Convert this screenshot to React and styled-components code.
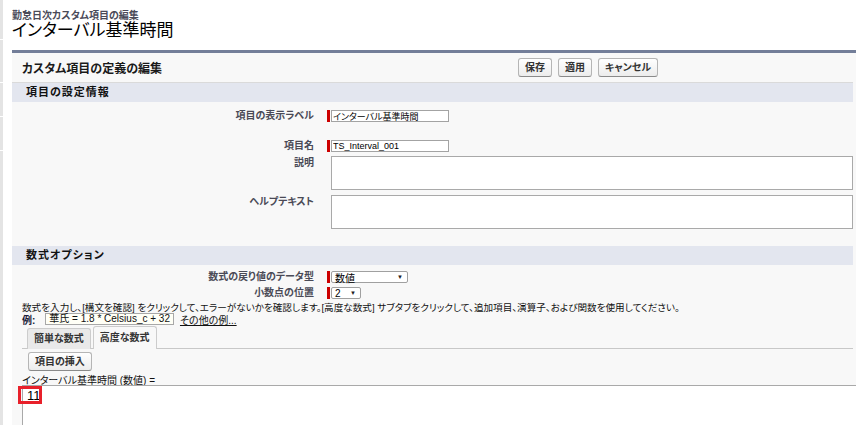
import React from "react";
import styled, { createGlobalStyle } from "styled-components";

const GlobalStyle = createGlobalStyle`
  html, body {
    margin: 0;
    padding: 0;
    background: #fff;
  }
  body {
    font-family: "Liberation Sans", "Noto Sans CJK JP", sans-serif;
    font-feature-settings: "palt";
    font-size: 10px;
    color: #222;
    overflow: hidden;
  }
`;

const Page = styled.div`
  display: flex;
  width: 856px;
  height: 425px;
  overflow: hidden;
`;

const SideStrip = styled.div`
  width: 3px;
  flex-shrink: 0;
  display: flex;
  flex-direction: column;
  gap: 1px;
`;

const StripPiece = styled.div`
  background: #e4e4e4;
  height: ${({ $h }) => ($h ? `${$h}px` : "auto")};
  flex: ${({ $h }) => ($h ? "none" : "1")};
`;

const Main = styled.div`
  flex: 1;
  min-width: 0;
  padding-left: 9px;
`;

const TitleBlock = styled.div`
  height: 50px;
  padding-top: 10px;
  box-sizing: border-box;
`;

const SubTitle = styled.div`
  font-size: 10px;
  font-weight: bold;
  line-height: 11px;
  color: #4a4a58;
`;

const PageTitle = styled.h1`
  margin: 0;
  font-size: 17px;
  font-weight: normal;
  line-height: 19px;
  color: #000;
`;

const Panel = styled.div`
  border-top: 3px solid #737e99;
  background: #f8f8f8;
  padding-right: 3px;
`;

const PanelHeader = styled.div`
  display: flex;
  align-items: center;
  height: 29px;
  padding-left: 10px;
  border-bottom: 1px solid #dadada;
`;

const HeaderTitle = styled.h2`
  margin: 0;
  width: 496px;
  font-size: 12px;
  font-weight: bold;
  color: #1a1a1a;
`;

const ButtonGroup = styled.div`
  display: flex;
  gap: 6px;
`;

const Button = styled.button`
  height: 19px;
  padding: 0 6px;
  border: 1px solid #b5b5b5;
  border-bottom-color: #8a8a8a;
  border-radius: 3px;
  background: linear-gradient(#ffffff, #ececec);
  font-family: inherit;
  font-feature-settings: "palt";
  font-size: 10px;
  font-weight: bold;
  color: #333;
  line-height: 17px;
`;

const SectionHeader = styled.h3`
  margin: 0;
  height: 19px;
  padding-left: 14px;
  background: #e3e6ef;
  font-size: 11px;
  font-weight: bold;
  letter-spacing: 1px;
  line-height: 19px;
  color: #111;
`;

const FieldRow = styled.div`
  display: grid;
  grid-template-columns: 302px 1fr;
  align-items: ${({ $top }) => ($top ? "start" : "center")};
  margin-top: ${({ $mt }) => $mt}px;
`;

const Label = styled.div`
  text-align: right;
  font-size: 10px;
  font-weight: bold;
  line-height: 12px;
  color: #4a4a56;
  padding-top: ${({ $top }) => ($top ? "1px" : "0")};
`;

const DataCell = styled.div`
  display: flex;
  align-items: flex-start;
  padding-left: 13px;
`;

const RequiredBar = styled.span`
  width: 3px;
  height: 12px;
  margin-right: 1px;
  flex-shrink: 0;
  background: ${({ $off }) => ($off ? "transparent" : "#c00")};
`;

const TextInput = styled.input`
  width: 118px;
  height: 12px;
  box-sizing: border-box;
  padding: 0 1px;
  border: 1px solid #a3a3a3;
  background: #fff;
  font-family: inherit;
  font-feature-settings: "palt";
  font-size: 9px;
  line-height: 10px;
  color: #000;
  outline: none;
`;

const TextArea = styled.textarea`
  flex: 1;
  height: 34px;
  box-sizing: border-box;
  border: 1px solid #a9a9a9;
  background: #fff;
  resize: none;
  outline: none;
`;

const SelectBox = styled.div`
  width: ${({ $w }) => $w}px;
  height: 12px;
  box-sizing: border-box;
  display: flex;
  align-items: center;
  justify-content: space-between;
  padding: 0 4px 0 3px;
  border: 1px solid #a0a0a0;
  border-radius: 2px;
  background: #fff;
  font-size: 10px;
  color: #000;
`;

const Caret = styled.span`
  font-size: 6px;
  line-height: 6px;
  color: #222;
`;

const Instructions = styled.p`
  margin: 3px 0 0;
  padding-left: 10px;
  font-size: 9.6px;
  line-height: 11px;
  color: #111;
  white-space: nowrap;
`;

const ExampleLine = styled.div`
  display: flex;
  align-items: center;
  height: 12px;
  padding-left: 10px;
  font-size: 10px;
  color: #111;
`;

const ExampleTag = styled.b`
  color: #1c1c3a;
`;

const ExampleBox = styled.span`
  margin-left: 10px;
  height: 12px;
  box-sizing: border-box;
  padding: 0 3px;
  border: 1px solid #a8a8a8;
  background: #fffff6;
  line-height: 10px;
`;

const MoreLink = styled.a`
  margin-left: 6px;
  color: #111;
  text-decoration: underline;
`;

const TabBar = styled.div`
  display: flex;
  align-items: flex-end;
  gap: 2px;
  height: 23px;
  margin: 1px 0 0 10px;
  padding-left: 5px;
  border-bottom: 1px solid #c8c8c8;
  box-sizing: border-box;
`;

const Tab = styled.div`
  height: ${({ $active }) => ($active ? 23 : 21)}px;
  box-sizing: border-box;
  padding: 0 6px;
  margin-bottom: -1px;
  border: 1px solid #cccccc;
  border-bottom: none;
  border-radius: 3px 3px 0 0;
  background: ${({ $active }) => ($active ? "#f8f8f8" : "#e9e9e9")};
  font-size: 10px;
  font-weight: bold;
  line-height: ${({ $active }) => ($active ? 21 : 19)}px;
  color: #333;
`;

const ToolRow = styled.div`
  padding: 3px 0 0 16px;
  display: flex;
`;

const FormulaLabel = styled.div`
  margin-top: 5px;
  padding-left: 10px;
  font-size: 10px;
  line-height: 9px;
  color: #111;
`;

const FormulaArea = styled.div`
  position: relative;
  height: 60px;
  margin: 0 -10px 0 10px;
  padding: 3px 4px;
  border: 1px solid #a9a9a9;
  border-right: none;
  background: #fff;
  font-size: 13px;
  line-height: 13px;
  color: #000;
`;

const Highlight = styled.span`
  position: absolute;
  left: -5px;
  top: 0;
  width: 24px;
  height: 18px;
  box-sizing: border-box;
  border: 3px solid #e8202a;
`;

const strip = [39, 42, 33, 33, 0];

export default function App() {
  return (
    <>
      <GlobalStyle />
      <Page>
        <SideStrip>
          {strip.map((h, i) => (
            <StripPiece key={i} $h={h} />
          ))}
        </SideStrip>
        <Main>
          <TitleBlock>
            <SubTitle>勤怠日次カスタム項目の編集</SubTitle>
            <PageTitle>インターバル基準時間</PageTitle>
          </TitleBlock>
          <Panel>
            <PanelHeader>
              <HeaderTitle>カスタム項目の定義の編集</HeaderTitle>
              <ButtonGroup>
                <Button>保存</Button>
                <Button>適用</Button>
                <Button>キャンセル</Button>
              </ButtonGroup>
            </PanelHeader>

            <SectionHeader>項目の設定情報</SectionHeader>
            <FieldRow $mt={8}>
              <Label>項目の表示ラベル</Label>
              <DataCell>
                <RequiredBar />
                <TextInput readOnly value="インターバル基準時間" />
              </DataCell>
            </FieldRow>
            <FieldRow $mt={18}>
              <Label>項目名</Label>
              <DataCell>
                <RequiredBar />
                <TextInput readOnly value="TS_Interval_001" />
              </DataCell>
            </FieldRow>
            <FieldRow $mt={4} $top>
              <Label $top>説明</Label>
              <DataCell>
                <RequiredBar $off />
                <TextArea readOnly />
              </DataCell>
            </FieldRow>
            <FieldRow $mt={5} $top>
              <Label $top>ヘルプテキスト</Label>
              <DataCell>
                <RequiredBar $off />
                <TextArea readOnly />
              </DataCell>
            </FieldRow>

            <FieldRow $mt={17} />
            <SectionHeader>数式オプション</SectionHeader>
            <FieldRow $mt={6}>
              <Label>数式の戻り値のデータ型</Label>
              <DataCell>
                <RequiredBar />
                <SelectBox $w={77}>
                  数値<Caret>▼</Caret>
                </SelectBox>
              </DataCell>
            </FieldRow>
            <FieldRow $mt={4}>
              <Label>小数点の位置</Label>
              <DataCell>
                <RequiredBar />
                <SelectBox $w={30}>
                  2<Caret>▼</Caret>
                </SelectBox>
              </DataCell>
            </FieldRow>

            <Instructions>
              数式を入力し、[構文を確認] をクリックして、エラーがないかを確認します。[高度な数式] サブタブをクリックして、追加項目、演算子、および関数を使用してください。
            </Instructions>
            <ExampleLine>
              <ExampleTag>例:</ExampleTag>
              <ExampleBox>華氏 = 1.8 * Celsius_c + 32</ExampleBox>
              <MoreLink>その他の例...</MoreLink>
            </ExampleLine>

            <TabBar>
              <Tab>簡単な数式</Tab>
              <Tab $active>高度な数式</Tab>
            </TabBar>
            <ToolRow>
              <Button>項目の挿入</Button>
            </ToolRow>
            <FormulaLabel>インターバル基準時間 (数値) =</FormulaLabel>
            <FormulaArea>
              11
              <Highlight />
            </FormulaArea>
          </Panel>
        </Main>
      </Page>
    </>
  );
}
